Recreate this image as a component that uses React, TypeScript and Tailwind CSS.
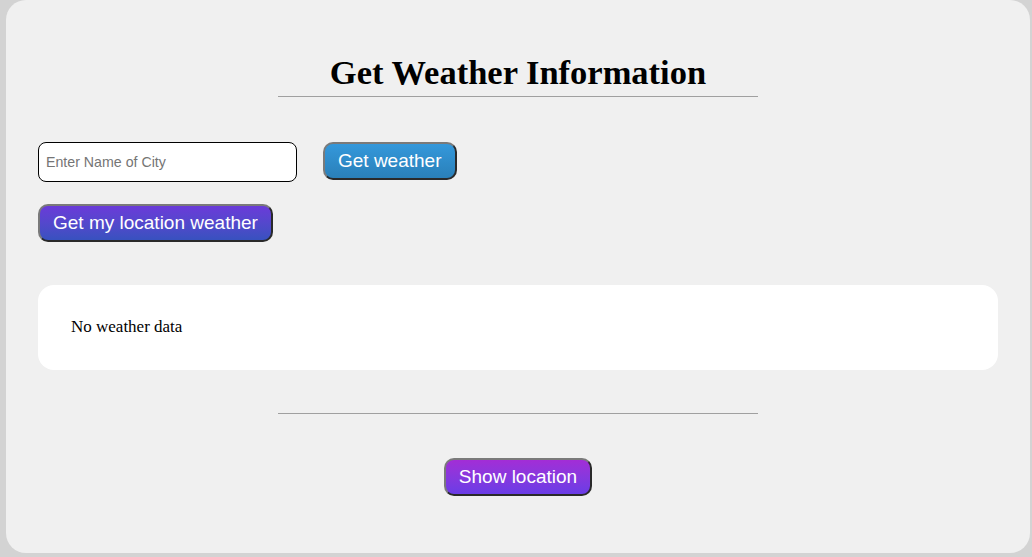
import React from "react";

export default function App() {
  const btn =
    "rounded-[10px] border-2 border-solid border-t-[#7a7a7a] border-l-[#7a7a7a] border-r-[#2a2a2a] border-b-[#2a2a2a] text-white text-[19px] leading-[22px] px-[13px] py-[6px] font-['Liberation_Sans',Arial,sans-serif]";
  return (
    <div className="w-[1032px] h-[557px] bg-[#d3d3d3] pl-[6px] pr-[2px] pb-[4px] font-['Liberation_Serif','Times_New_Roman',serif]">
      <div className="h-full bg-[#f0f0f0] rounded-[20px] px-[32px] pt-[51px]">
        <h1 className="text-center font-bold text-[34.5px] leading-[42px] text-black">
          Get Weather Information
        </h1>
        <div className="mx-auto w-1/2 h-px bg-[#a0a0a0] mt-[3px]" />
        <div className="flex items-center gap-[26px] mt-[45px]">
          <input
            placeholder="Enter Name of City"
            className="w-[259px] h-[40px] border border-black rounded-[8px] bg-white px-[7px] text-[14.2px] placeholder:text-[#757575] font-['Liberation_Sans',Arial,sans-serif] outline-none"
          />
          <button className={`${btn} bg-gradient-to-b from-[#3498db] to-[#2a80b9] -mt-[2px]`}>
            Get weather
          </button>
        </div>
        <div className="mt-[22px]">
          <button className={`${btn} bg-gradient-to-b from-[#6a3ad9] to-[#3751bf]`}>
            Get my location weather
          </button>
        </div>
        <div className="mt-[43px] bg-white rounded-[16px] px-[33px] py-[31px] text-[17px] leading-[22px] text-black h-[85px]">
          No weather data
        </div>
        <div className="mx-auto w-1/2 h-px bg-[#a0a0a0] mt-[43px]" />
        <div className="flex justify-center mt-[44px]">
          <button className={`${btn} bg-gradient-to-b from-[#a22dd6] to-[#6a3ce6]`}>
            Show location
          </button>
        </div>
      </div>
    </div>
  );
}
